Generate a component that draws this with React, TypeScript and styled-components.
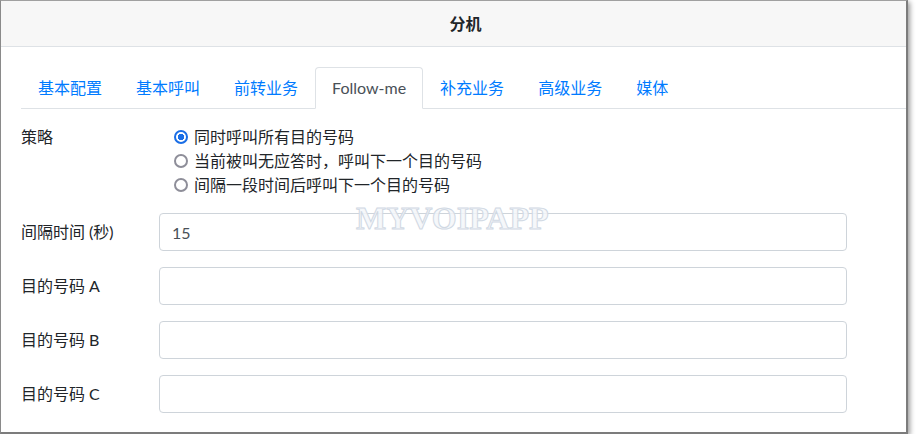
import styled, { createGlobalStyle } from 'styled-components';

const GlobalStyle = createGlobalStyle`
  html, body {
    margin: 0;
    padding: 0;
    background: #ffffff;
  }
  body {
    font-family: Lato, "Noto Sans CJK SC", sans-serif;
    font-size: 16px;
    color: #212529;
  }
`;

const tabs = ['基本配置', '基本呼叫', '前转业务', 'Follow-me', '补充业务', '高级业务', '媒体'];

const strategies = ['同时呼叫所有目的号码', '当前被叫无应答时，呼叫下一个目的号码', '间隔一段时间后呼叫下一个目的号码'];

const fields = [
  { label: '间隔时间 (秒)', value: '15' },
  { label: '目的号码 A', value: '' },
  { label: '目的号码 B', value: '' },
  { label: '目的号码 C', value: '' },
];

export default function App() {
  return (
    <>
      <GlobalStyle />
      <DivWindow>
        <DivHeader>
          <TitleText>分机</TitleText>
        </DivHeader>
        <DivBody>
          <NavTabs>
            {tabs.map((tab) => (
              <TabItem key={tab} $isActive={tab === 'Follow-me'}>
                {tab}
              </TabItem>
            ))}
          </NavTabs>
          <DivContent>
            <FormRow>
              <RowLabel>策略</RowLabel>
              <RadioGroup>
                {strategies.map((text, index) => (
                  <RadioLine key={text}>
                    <RadioInput type="radio" name="strategy" defaultChecked={index === 0} />
                    {text}
                  </RadioLine>
                ))}
              </RadioGroup>
            </FormRow>
            {fields.map((field) => (
              <FormRow key={field.label}>
                <RowLabel $isFieldLabel>{field.label}</RowLabel>
                <TextInput type="text" defaultValue={field.value} />
              </FormRow>
            ))}
          </DivContent>
        </DivBody>
        <Watermark>MYVOIPAPP</Watermark>
      </DivWindow>
    </>
  );
}

const DivWindow = styled.div`
  position: relative;
  width: 905px;
  background: #ffffff;
  border-top: 1px solid #a0a0a0;
  border-left: 1px solid #8a8a8a;
  border-right: 2px solid #7c7c7c;
  border-bottom: 2px solid #7c7c7c;
  box-shadow: 2px 2px 5px rgba(0, 0, 0, 0.4);
`;

const DivHeader = styled.div`
  display: flex;
  align-items: center;
  justify-content: center;
  height: 45px;
  padding-left: 24px;
  background: #f7f7f7;
  border-bottom: 1px solid #dee2e6;
`;

const TitleText = styled.div`
  font-size: 16px;
  font-weight: 700;
  line-height: 24px;
  color: #212529;
`;

const DivBody = styled.div`
  padding: 20px 0 19px 20px;
`;

const NavTabs = styled.div`
  display: flex;
  border-bottom: 1px solid #dee2e6;
`;

const TabItem = styled.div<{ $isActive?: boolean }>`
  padding: 8px 16px;
  margin-bottom: -1px;
  font-size: 16px;
  line-height: 24px;
  border: 1px solid ${(props) => (props.$isActive ? '#dee2e6' : 'transparent')};
  border-bottom-color: ${(props) => (props.$isActive ? '#ffffff' : 'transparent')};
  border-radius: 4px 4px 0 0;
  background: ${(props) => (props.$isActive ? '#ffffff' : 'transparent')};
  color: ${(props) => (props.$isActive ? '#495057' : '#007bff')};
  cursor: pointer;
`;

const DivContent = styled.div`
  display: flex;
  flex-direction: column;
  gap: 16px;
  padding-top: 16px;
`;

const FormRow = styled.div`
  display: grid;
  grid-template-columns: 138px 688px;
  align-items: start;
`;

const RowLabel = styled.div<{ $isFieldLabel?: boolean }>`
  padding-top: ${(props) => (props.$isFieldLabel ? '7px' : '0')};
  line-height: 24px;
  font-size: 16px;
  color: #212529;
`;

const RadioGroup = styled.div`
  display: flex;
  flex-direction: column;
  padding-left: 15px;
`;

const RadioLine = styled.label`
  display: flex;
  align-items: center;
  line-height: 24px;
  font-size: 16px;
  color: #212529;
`;

const RadioInput = styled.input`
  appearance: none;
  box-sizing: border-box;
  flex: none;
  width: 14px;
  height: 14px;
  margin: 0 6px 0 0;
  border: 2px solid #8e8e99;
  border-radius: 50%;
  background: #ffffff;

  &:checked {
    border-color: #1a6ee6;
    background: radial-gradient(circle, #1a6ee6 0 3px, #ffffff 3.5px);
  }
`;

const TextInput = styled.input`
  box-sizing: border-box;
  width: 688px;
  height: 38px;
  padding: 6px 12px;
  font-family: Lato, "Noto Sans CJK SC", sans-serif;
  font-size: 16px;
  line-height: 24px;
  color: #495057;
  background: #ffffff;
  border: 1px solid #ced4da;
  border-radius: 4px;
  outline: none;
`;

const Watermark = styled.div`
  position: absolute;
  left: 355px;
  top: 201px;
  font-family: "Liberation Serif", serif;
  font-weight: 700;
  font-size: 32px;
  line-height: 32px;
  color: rgba(244, 246, 250, 0.85);
  -webkit-text-stroke: 1px #d0d8e3;
  pointer-events: none;
  user-select: none;
`;
